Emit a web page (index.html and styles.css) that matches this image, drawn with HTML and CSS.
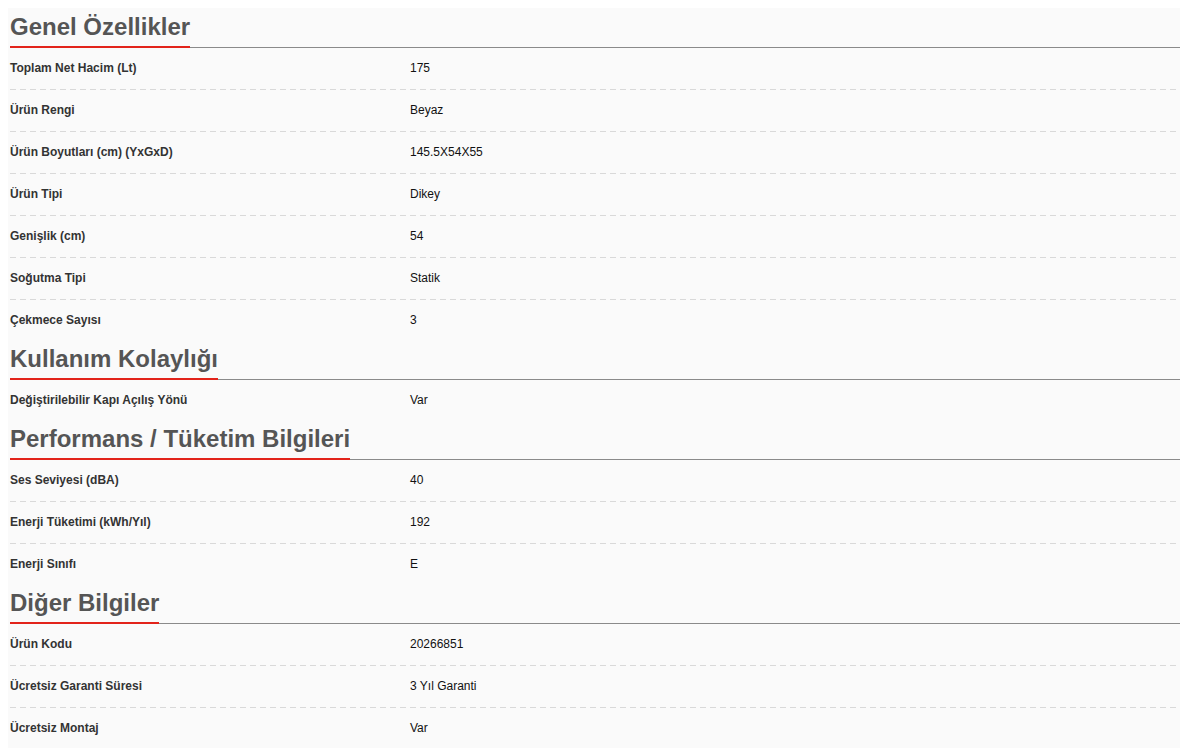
FILE: index.html
```html
<!DOCTYPE html>
<html lang="tr">
<head>
<meta charset="utf-8">
<title>Ürün Özellikleri</title>
<link rel="stylesheet" href="styles.css">
</head>
<body>
<div class="specs">
  <section class="group">
    <h2 class="group-title"><span>Genel Özellikler</span></h2>
    <div class="row"><div class="label">Toplam Net Hacim (Lt)</div><div class="value">175</div></div>
    <div class="row"><div class="label">Ürün Rengi</div><div class="value">Beyaz</div></div>
    <div class="row"><div class="label">Ürün Boyutları (cm) (YxGxD)</div><div class="value">145.5X54X55</div></div>
    <div class="row"><div class="label">Ürün Tipi</div><div class="value">Dikey</div></div>
    <div class="row"><div class="label">Genişlik (cm)</div><div class="value">54</div></div>
    <div class="row"><div class="label">Soğutma Tipi</div><div class="value">Statik</div></div>
    <div class="row"><div class="label">Çekmece Sayısı</div><div class="value">3</div></div>
  </section>
  <section class="group">
    <h2 class="group-title"><span>Kullanım Kolaylığı</span></h2>
    <div class="row"><div class="label">Değiştirilebilir Kapı Açılış Yönü</div><div class="value">Var</div></div>
  </section>
  <section class="group">
    <h2 class="group-title"><span>Performans / Tüketim Bilgileri</span></h2>
    <div class="row"><div class="label">Ses Seviyesi (dBA)</div><div class="value">40</div></div>
    <div class="row"><div class="label">Enerji Tüketimi (kWh/Yıl)</div><div class="value">192</div></div>
    <div class="row"><div class="label">Enerji Sınıfı</div><div class="value">E</div></div>
  </section>
  <section class="group">
    <h2 class="group-title"><span>Diğer Bilgiler</span></h2>
    <div class="row"><div class="label">Ürün Kodu</div><div class="value">20266851</div></div>
    <div class="row"><div class="label">Ücretsiz Garanti Süresi</div><div class="value">3 Yıl Garanti</div></div>
    <div class="row"><div class="label">Ücretsiz Montaj</div><div class="value">Var</div></div>
  </section>
</div>
</body>
</html>
```

FILE: styles.css
```css
html, body {
  background: #ffffff;
}
body {
  margin: 8px 9px 0 8px;
  font-family: "Liberation Sans", Arial, Helvetica, sans-serif;
}
.specs {
  background: #fafafa;
  padding: 0 0 0 2px;
}
.group-title {
  display: flex;
  margin: 0;
  padding-top: 5px;
  border-bottom: 1px solid #8a8a8a;
  font-size: 24px;
  line-height: 28px;
  font-weight: bold;
  color: #555555;
}
.group-title span {
  display: block;
  padding-bottom: 5px;
  border-bottom: 2px solid #e2231a;
  margin-bottom: -1px;
}
.row {
  display: grid;
  grid-template-columns: 400px 1fr;
  align-items: center;
  height: 40px;
  padding-bottom: 1px;
  border-bottom: 1px solid transparent;
  background-image: linear-gradient(to right, #d9d9d9 6px, transparent 6px);
  background-size: 10px 1px;
  background-repeat: repeat-x;
  background-position: left bottom;
  background-origin: border-box;
  background-clip: border-box;
  font-size: 12px;
  line-height: 14px;
}
.row:last-child {
  background-image: none;
  padding-bottom: 0;
  border-bottom-width: 0;
}
.label {
  font-weight: bold;
  color: #333333;
}
.value {
  color: #111111;
}
```
